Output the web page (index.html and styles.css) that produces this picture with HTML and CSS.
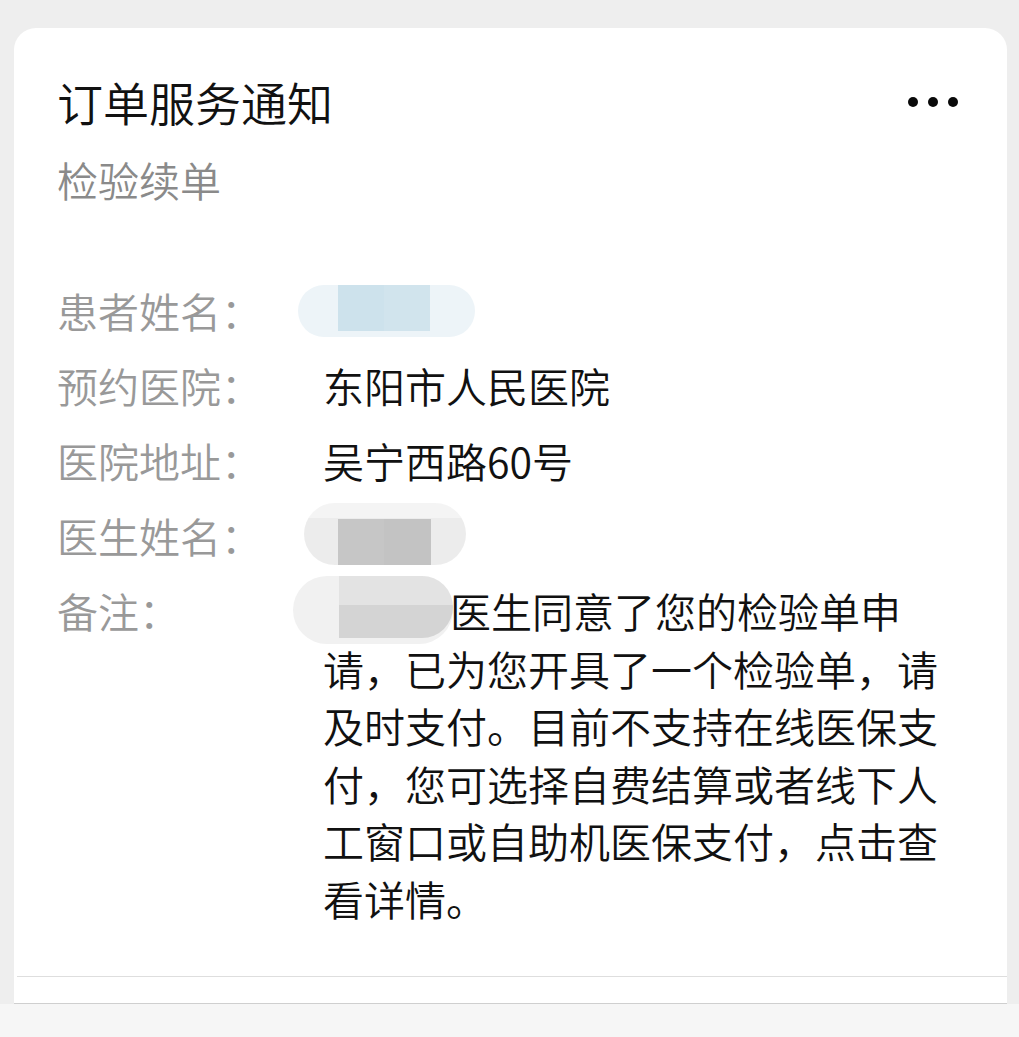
FILE: index.html
```html
<!DOCTYPE html>
<html lang="zh-CN">
<head>
<meta charset="utf-8">
<title>订单服务通知</title>
<link rel="stylesheet" href="styles.css">
</head>
<body>
<div class="page">
  <div class="card">
    <div class="head">
      <div class="title">订单服务通知</div>
      <div class="more"><span></span><span></span><span></span></div>
    </div>
    <div class="subtitle">检验续单</div>
    <div class="rows">
      <div class="row">
        <div class="label">患者姓名：</div>
        <div class="value"><span class="blur blur-patient"><span class="blob"><span class="core"></span></span></span></div>
      </div>
      <div class="row">
        <div class="label">预约医院：</div>
        <div class="value">东阳市人民医院</div>
      </div>
      <div class="row">
        <div class="label">医院地址：</div>
        <div class="value">吴宁西路60号</div>
      </div>
      <div class="row">
        <div class="label">医生姓名：</div>
        <div class="value"><span class="blur blur-doctor"><span class="blob"><span class="core"></span></span></span></div>
      </div>
      <div class="row">
        <div class="label">备注：</div>
        <div class="value note"><span class="blur blur-note"><span class="blob"><span class="core"></span></span></span>医生同意了您的检验单申请，已为您开具了一个检验单，请及时支付。目前不支持在线医保支付，您可选择自费结算或者线下人工窗口或自助机医保支付，点击查看详情。</div>
      </div>
    </div>
    <div class="spacer"></div>
    <div class="divider"></div>
    <div class="foot"></div>
  </div>
  <div class="bottom"></div>
</div>
</body>
</html>
```

FILE: styles.css
```css
html, body {
  margin: 0;
  padding: 0;
}
body {
  background: #eeeeee;
  font-family: "Noto Sans CJK SC", "Noto Sans", sans-serif;
  font-weight: 350;
  text-spacing-trim: space-all;
}
.page {
  width: 1019px;
  height: 1037px;
  display: flex;
  flex-direction: column;
  overflow: hidden;
}
.card {
  margin: 28px 12px 0 14px;
  height: 976px;
  box-sizing: border-box;
  background: #ffffff;
  border-radius: 22px 22px 0 0;
  border-bottom: 1px solid #cfcfcf;
  padding: 43px 0 0 43px;
  display: flex;
  flex-direction: column;
}
.head {
  display: flex;
  justify-content: space-between;
  align-items: center;
  padding-right: 49px;
}
.title {
  font-size: 46px;
  line-height: 60px;
  color: #111111;
}
.more {
  display: flex;
  gap: 10px;
  margin-top: 2px;
}
.more span {
  width: 10px;
  height: 10px;
  border-radius: 50%;
  background: #0a0a0a;
}
.subtitle {
  margin-top: 20px;
  font-size: 41px;
  line-height: 57px;
  color: #8a8a8a;
}
.rows {
  margin-top: 74px;
  display: flex;
  flex-direction: column;
  gap: 17.5px;
}
.row {
  display: grid;
  grid-template-columns: 266px 630px;
  font-size: 41px;
  line-height: 57.5px;
}
.label {
  color: #999999;
}
.value {
  color: #111111;
}
.blur {
  display: inline-block;
  vertical-align: top;
  height: 57.5px;
}
.blob {
  display: block;
}
.core {
  display: block;
}
.blur-patient {
  width: 150px;
}
.blur-patient .blob {
  margin-left: -25px;
  margin-top: 3px;
  width: 177px;
  height: 52px;
  border-radius: 26px;
  background: #edf4f8;
}
.blur-patient .core {
  margin-left: 40px;
  width: 92px;
  height: 46px;
  background: linear-gradient(90deg, #cde2ec 0 50%, #d1e4ed 50% 100%);
}
.blur-doctor {
  width: 143px;
}
.blur-doctor .blob {
  margin-left: -19px;
  margin-top: -4px;
  width: 162px;
  height: 62px;
  border-radius: 31px;
  background: linear-gradient(180deg, #f4f4f4 0 24%, #ececec 24% 100%);
}
.blur-doctor .core {
  position: relative;
  top: 16px;
  margin-left: 34px;
  width: 93px;
  height: 46px;
  background: linear-gradient(90deg, #c6c6c6 0 50%, #c3c3c3 50% 100%);
}
.blur-note {
  width: 127px;
}
.blur-note .blob {
  margin-left: -30px;
  margin-top: -6px;
  width: 160px;
  height: 68px;
  border-radius: 34px;
  background: #f1f1f1;
}
.blur-note .core {
  margin-left: 46px;
  width: 114px;
  height: 62px;
  border-radius: 0 31px 31px 0;
  background: linear-gradient(180deg, #e3e3e3 0 46%, #d4d4d4 46% 100%);
}
.spacer {
  flex: 1;
}
.divider {
  margin-left: -40px;
  height: 1px;
  background: #dedede;
}
.foot {
  height: 26px;
}
.bottom {
  flex: 1;
  background: #f6f6f6;
}
```
